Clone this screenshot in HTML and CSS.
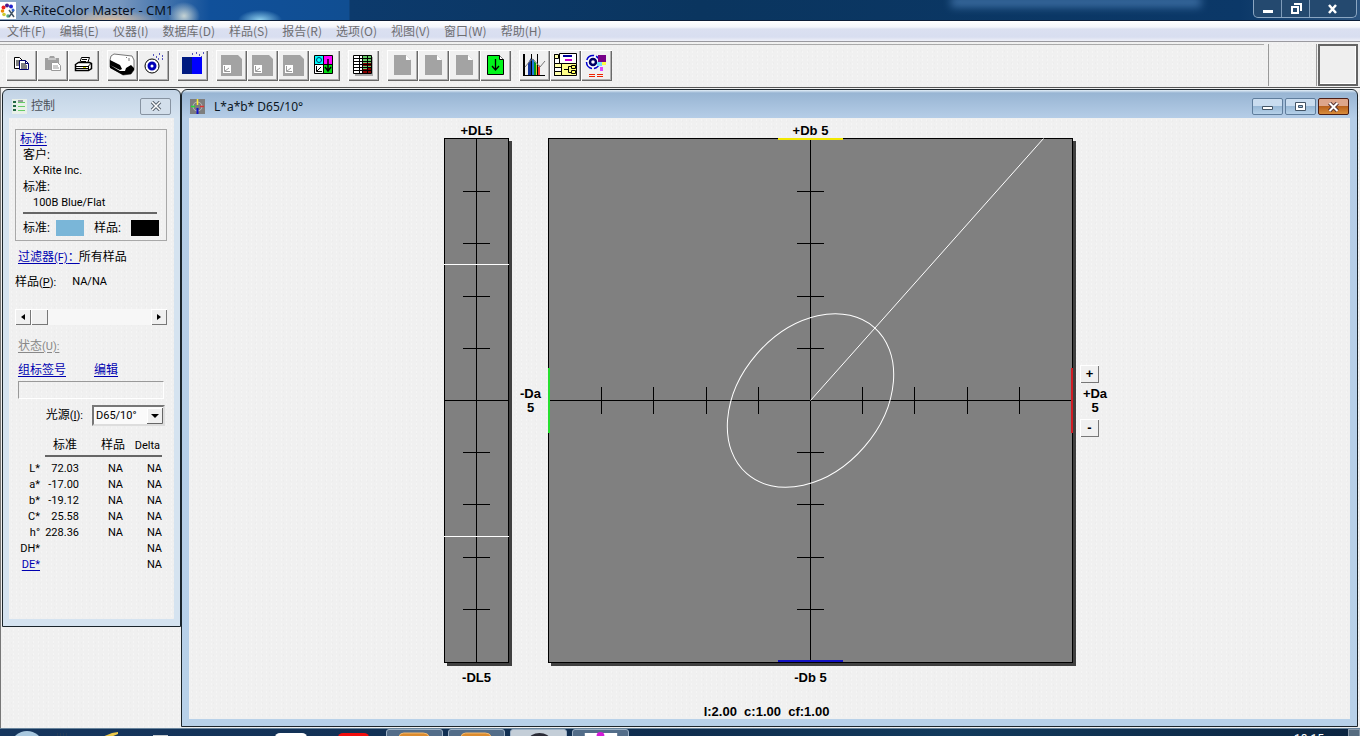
FILE: index.html
```html
<!DOCTYPE html>
<html lang="zh-CN">
<head>
<meta charset="utf-8">
<title>X-RiteColor Master - CM1</title>
<link rel="stylesheet" href="styles.css">
</head>
<body>
<header class="titlebar">
  <svg class="app-icon" viewBox="0 0 16 17"><rect width="16" height="17" fill="#fff"/><circle cx="7" cy="3.500" r="2" fill="#4a1a8c"/><circle cx="11" cy="4.500" r="2" fill="#22c"/><circle cx="3.500" cy="5.500" r="2" fill="#e22"/><circle cx="2.500" cy="9" r="1.800" fill="#e80"/><circle cx="4" cy="12.500" r="1.800" fill="#cc3"/><circle cx="8" cy="14" r="1.800" fill="#5a8"/><path d="M9 8l5 7M14 8l-5 7" stroke="#456" stroke-width="1.500"/><circle cx="13" cy="8" r="1.500" fill="#36c"/></svg>
  <h1 class="app-title">X-RiteColor Master - CM1</h1>
  <div class="glow"></div>
  <div class="win-buttons">
    <button class="win-btn" aria-label="最小化"><svg viewBox="0 0 12 12"><path d="M1 7h10v3H1z" fill="#fff"/></svg></button>
    <button class="win-btn" aria-label="还原"><svg viewBox="0 0 12 12"><path d="M4 1h7v7M2 4h6v6H2z" fill="none" stroke="#fff" stroke-width="2"/></svg></button>
    <button class="win-btn win-close" aria-label="关闭"><svg viewBox="0 0 12 12"><path d="M2 2l7 8M9 2l-7 8" stroke="#fff" stroke-width="2.500"/></svg></button>
  </div>
</header>

<nav class="menubar">
  <button>文件(F)</button><button>编辑(E)</button><button>仪器(I)</button><button>数据库(D)</button><button>样品(S)</button><button>报告(R)</button><button>选项(O)</button><button>视图(V)</button><button>窗口(W)</button><button>帮助(H)</button>
</nav>

<div class="toolbar">
  <div class="tools">
    <div class="group">
      <button aria-label="复制"><svg viewBox="0 0 31 31"><g fill="#fff" stroke="#000"><path d="M8.500 7.500h5l3 3v8h-8z"/><path d="M13.500 10.500h6l3 3v6h-9z" stroke="#00006a"/></g><path d="M10 11h4M10 13h3M10 15h3M15 14h5M15 16h6M15 18h6" stroke="#000"/><path d="M19.500 10.500v3h3" fill="none" stroke="#00006a"/></svg></button>
      <button aria-label="粘贴"><svg viewBox="0 0 31 31"><path d="M8 8h4l1-2h4l1 2h4v12H8z" fill="#a0a0a0"/><path d="M11 9h8" stroke="#eee"/><path d="M14.500 12.500h6l3 3v5h-9z" fill="#fff" stroke="#999"/><path d="M16 16h5M16 18h6" stroke="#999"/></svg></button>
      <button aria-label="打印"><svg viewBox="0 0 31 31"><path d="M11.500 13.500l2-6h8l-2 6" fill="#fff" stroke="#000"/><path d="M14 9.500h5M13 11.500h5" stroke="#000"/><path d="M7.500 14.500l3-2h11l2 1v5l-3 2h-13z" fill="#fff" stroke="#000" stroke-width="1.500"/><path d="M8 16.500h12l3-3M8 18.500h12M20.500 16v4" stroke="#000" fill="none"/><path d="M15 17.500h3" stroke="#cc0"/></svg></button>
    </div>
    <div class="group">
      <button aria-label="测量仪器"><svg viewBox="0 0 31 31"><path d="M4 6l3-2 18 2 2 4v10l-3 4-8 1-13-8V10z" fill="#fff" stroke="#777"/><path d="M3 10l10 5 2 4-2 1-10-5zM3 15l10 6h5l1-3 5-3 3 3v2l-3 4-8 1L3 18z" fill="#000"/><path d="M19 7l1 1M22 8v3" stroke="#777"/></svg></button>
      <button aria-label="校准"><svg viewBox="0 0 31 31"><circle cx="14" cy="16" r="7" fill="#fff" stroke="#000"/><circle cx="14" cy="16" r="3" fill="#fff" stroke="#0000b8" stroke-width="3"/><path d="M15 5h1M18 7h1M21 4h1M24 6h1M20 9h1M24 9h1" stroke="#22a" stroke-width="1.500"/></svg></button>
    </div>
    <div class="group">
      <button aria-label="颜色"><svg viewBox="0 0 31 31"><path d="M5 7h10v17H5z" fill="#001a80"/><path d="M15 7h10v17H15z" fill="#00f"/><path d="M15 4h1M19 3h1M22 5h1M26 3h1M24 7h1" stroke="#22a" stroke-width="1.500"/></svg></button>
    </div>
    <div class="group">
      <button aria-label="样品图一"><svg viewBox="0 0 31 31"><path d="M5 5h17l4 4v17H5z" fill="#a3a3a3"/><path d="M7 15h8v8H7z" fill="#fff"/><path d="M8.500 16v5.500H14M9 21l4-3" fill="none" stroke="#999"/></svg></button>
      <button aria-label="样品图二"><svg viewBox="0 0 31 31"><path d="M5 5h17l4 4v17H5z" fill="#a3a3a3"/><path d="M7 15h8v8H7z" fill="#fff"/><path d="M8.500 16v5.500H14M9 21l4-3" fill="none" stroke="#999"/></svg></button>
      <button aria-label="样品图三"><svg viewBox="0 0 31 31"><path d="M5 5h17l4 4v17H5z" fill="#a3a3a3"/><path d="M7 15h8v8H7z" fill="#fff"/><path d="M8.500 16v5.500H14M9 21l4-3" fill="none" stroke="#999"/></svg></button>
      <button aria-label="下一个视图"><svg viewBox="0 0 31 31"><path d="M6 6h9v9H6z" fill="#0ff"/><path d="M15 6h9v9h-9z" fill="#f0f"/><path d="M6 15h9v8H6z" fill="#fff"/><path d="M15 15h9v8h-9z" fill="#0d1"/><path d="M5.500 5.500h18v18h-18zM14.500 5.500v18M5.500 14.500h18" fill="none" stroke="#000"/><circle cx="10" cy="10" r="2.500" fill="none" stroke="#036"/><path d="M7.500 16v5.500H13M8 21l4-4" fill="none" stroke="#000"/><path d="M19 9v12M16 17l3 4 3-4" fill="none" stroke="#000" stroke-width="1.500"/></svg></button>
    </div>
    <div class="group">
      <button aria-label="数据表"><svg viewBox="0 0 31 31"><path d="M7 7h18v19H7z" fill="#aaa"/><path d="M5 5h9v18H5z" fill="#fff"/><path d="M14 5h9v18h-9z" fill="#6c6"/><path d="M15 13h8v3h-8zM15 19h8v4h-8zM19 17h4v2h-4z" fill="#800"/><path d="M5.500 5.500h18v18h-18zM5 8.500h18M5 11.500h18M5 14.500h18M5 17.500h18M5 20.500h18M11.500 5v18M14.500 5v18M19.500 5v18" fill="none" stroke="#000"/></svg></button>
    </div>
    <div class="group">
      <button aria-label="文档一"><svg viewBox="0 0 31 31"><path d="M7 5h12l5 5v15H7z" fill="#a3a3a3"/><path d="M19 5v5h5z" fill="#fff"/></svg></button>
      <button aria-label="文档二"><svg viewBox="0 0 31 31"><path d="M7 5h12l5 5v15H7z" fill="#a3a3a3"/><path d="M19 5v5h5z" fill="#fff"/></svg></button>
      <button aria-label="文档三"><svg viewBox="0 0 31 31"><path d="M7 5h12l5 5v15H7z" fill="#a3a3a3"/><path d="M19 5v5h5z" fill="#fff"/></svg></button>
      <button aria-label="下一个文档"><svg viewBox="0 0 31 31"><path d="M7.500 5.500h12l4 4v15h-16z" fill="#00f51a" stroke="#000"/><path d="M19.500 5.500v4h4" fill="#fff" stroke="#000"/><path d="M15.500 9v11M12 16l3.500 4 3.500-4" fill="none" stroke="#000" stroke-width="1.300"/></svg></button>
    </div>
    <div class="group">
      <button aria-label="光谱图"><svg viewBox="0 0 31 31"><path d="M9 13l3-5v17H9z" fill="#139"/><path d="M12 8l3 2v15h-3z" fill="#27d"/><path d="M15 11l2 2v12h-2z" fill="#092"/><path d="M17 14l2 2v9h-2z" fill="#dc2"/><path d="M19 17l2-2v10h-2z" fill="#e33"/><path d="M4 4h2v21h20v1H4zM12 4h1v21h-1zM18 4h1v21h-1z" fill="#000"/><path d="M6 17l5-6 3-2 7 8 5-6" fill="none" stroke="#777"/></svg></button>
      <button aria-label="数据库视图"><svg viewBox="0 0 31 31"><path d="M3.500 3.500h24v23h-24z" fill="#fff"/><path d="M4.500 4v22" stroke="#000"/><path d="M4.500 4.500h4v4h-4zM4.500 13.500h7v4h-7zM4.500 21.500h7v4h-7z" fill="#ffa" stroke="#000"/><path d="M9.500 3.500h17v10h-17z" fill="#fff" stroke="#000"/><path d="M13 6h9" stroke="#009" stroke-width="2"/><path d="M15 10h7" stroke="#c0c" stroke-width="2"/><path d="M11.500 13.500h15v12h-15z" fill="#ff8" stroke="#000"/><path d="M14 19.500h5M18.500 16.500v6M18.500 16.500h3M18.500 22.500h3" stroke="#000" fill="none"/><path d="M21.500 15.500h4v3h-4zM21.500 20.500h4v3h-4z" fill="#ff5" stroke="#000"/></svg></button>
      <button aria-label="目标选项"><svg viewBox="0 0 31 31"><circle cx="12" cy="12" r="6.500" fill="#fff" stroke="#00c" stroke-dasharray="9 2" stroke-width="1.500"/><circle cx="12" cy="12" r="3" fill="#fff" stroke="#006" stroke-width="2.500"/><path d="M17 5h8v7h-8z" fill="#708"/><path d="M16 12h5v4h-5z" fill="#7df"/><path d="M21 12h4v3h-4z" fill="#ff4"/><path d="M19 17h3v4h-3z" fill="#d4f"/><path d="M8 24.500h6M16 24.500h6M8 26.500h6M16 26.500h6" stroke="#e20"/></svg></button>
    </div>
  </div>
  <div class="tool-cell"></div>
  <div class="color-well"></div>
</div>

<main class="desktop">
  <section class="window panel">
    <header class="caption">
      <svg class="cap-icon" viewBox="0 0 15 15"><path d="M0 0h15v15H0z" fill="#e8f0e8"/><path d="M1 3h3M1 7h3M1 11h3" stroke="#264" stroke-width="2"/><path d="M6 3.500h7M6 7.500h7M6 11.500h7" stroke="#6c6"/><path d="M6 2h5" stroke="#445"/></svg>
      <h2>控制</h2>
      <button class="panel-close" aria-label="关闭控制"><svg viewBox="0 0 12 10"><path d="M2 1l8 8M10 1L2 9" stroke="#59646f" stroke-width="3.500"/><path d="M2 1l8 8M10 1L2 9" stroke="#fff" stroke-width="1.500"/></svg></button>
    </header>
    <div class="panel-body">
      <div class="standard">
        <a href="#standard">标准:</a>
        <div class="indent-1">客户:</div>
        <div class="indent-2">X-Rite Inc.</div>
        <div class="indent-1">标准:</div>
        <div class="indent-2">100B Blue/Flat</div>
        <hr>
        <div class="swatches"><span>标准:</span><i class="swatch blue"></i><span>样品:</span><i class="swatch black"></i></div>
      </div>
      <div class="filter"><a href="#filter">过滤器<small>(F)</small>：</a><span>所有样品</span></div>
      <div class="sample"><label for="sample">样品<small>(<u>P</u>):</small></label><small>NA/NA</small></div>
      <div class="scroll"><button aria-label="上一个样品"><svg viewBox="0 0 6 8"><path d="M5 1v6L1 4z"/></svg></button><input id="sample" type="range" min="0" max="10" value="0"><button aria-label="下一个样品"><svg viewBox="0 0 6 8"><path d="M1 1v6l4-3z"/></svg></button></div>
      <label class="status" for="status">状态<small>(U):</small></label>
      <div class="links"><a href="#tag">组标签号</a><a href="#edit">编辑</a></div>
      <input class="status-box" id="status" type="text" readonly>
      <div class="light">
        <label for="light">光源<small>(<u>I</u>):</small></label>
        <div class="select-wrap"><select id="light"><option>D65/10°</option></select><svg viewBox="0 0 16 16"><path d="M0 0h16v16H0z" fill="#f0f0f0"/><path d="M.5 16V.5H16" fill="none" stroke="#fff"/><path d="M0 15.500h15.500V0" fill="none" stroke="#666"/><path d="M4 6h8l-4 4z"/></svg></div>
      </div>
      <table class="values">
        <thead><tr><td></td><th class="ruled">标准</th><th class="ruled">样品</th><th class="ruled"><small>Delta</small></th></tr></thead>
        <tbody>
          <tr><th>L*</th><td>72.03</td><td>NA</td><td>NA</td></tr>
          <tr><th>a*</th><td>-17.00</td><td>NA</td><td>NA</td></tr>
          <tr><th>b*</th><td>-19.12</td><td>NA</td><td>NA</td></tr>
          <tr><th>C*</th><td>25.58</td><td>NA</td><td>NA</td></tr>
          <tr><th>h°</th><td>228.36</td><td>NA</td><td>NA</td></tr>
          <tr><th>DH*</th><td></td><td></td><td>NA</td></tr>
          <tr><th><a href="#de">DE*</a></th><td></td><td></td><td>NA</td></tr>
        </tbody>
      </table>
    </div>
  </section>

  <section class="window chart">
    <header class="caption">
      <svg class="cap-icon" viewBox="0 0 15 15"><path d="M0 0h15v15H0z" fill="#7d7d7d"/><circle cx="7.500" cy="7.500" r="4.500" fill="none" stroke="#bbb"/><path d="M7.500 0v6" stroke="#fe3" stroke-width="1.500"/><path d="M7.500 9v6" stroke="#11c" stroke-width="2"/><path d="M1 7.500h4" stroke="#2d3" stroke-width="1.500"/><path d="M10 7.500h4" stroke="#d33" stroke-width="1.500"/></svg>
      <h2>L*a*b* D65/10°</h2>
      <div class="child-buttons">
        <button aria-label="最小化子窗口"><svg viewBox="0 0 13 10"><path d="M1.500 4.500h10v3h-10z" fill="#fff" stroke="#456"/></svg></button>
        <button aria-label="最大化子窗口"><svg viewBox="0 0 13 10"><path d="M1.500.5h10v8h-10z" fill="#fff" stroke="#456"/><path d="M4.500 3.500h4v2h-4z" fill="#9bd" stroke="#456"/></svg></button>
        <button class="child-close" aria-label="关闭子窗口"><svg viewBox="0 0 12 10"><path d="M2 1l8 8M10 1L2 9" stroke="#533" stroke-width="4"/><path d="M2 1l8 8M10 1L2 9" stroke="#fff" stroke-width="2"/></svg></button>
      </div>
    </header>
    <div class="chart-body">
      <div class="plots">
        <div class="label dl-top">+DL5</div>
        <div class="label db-top">+Db 5</div>
        <svg class="plot dl" viewBox="0 0 65 525">
          <path d="M0 0h65v525H0z" fill="#808080"/>
          <path d="M.5.5h64v524H.5zM32.500 0v525M0 262.500h65M19 53.500h27M19 105.500h27M19 158.500h27M19 210.500h27M19 314.500h27M19 366.500h27M19 419.500h27M19 471.500h27" fill="none" stroke="#000"/>
          <path d="M0 126.500h65M0 398.500h65" stroke="#fff"/>
        </svg>
        <div class="label da-left">-Da<br>5</div>
        <svg class="plot ab" viewBox="0 0 525 525">
          <path d="M0 0h525v525H0z" fill="#808080"/>
          <path d="M.5.5h524v524H.5zM262.500 0v525M0 262.500h525M249 53.500h27M249 105.500h27M249 158.500h27M249 210.500h27M249 314.500h27M249 366.500h27M249 419.500h27M249 471.500h27M53.500 249v27M105.500 249v27M158.500 249v27M210.500 249v27M314.500 249v27M366.500 249v27M419.500 249v27M471.500 249v27" fill="none" stroke="#000"/>
          <path class="curve" d="M262.500 262.500L495.500.5"/>
          <ellipse class="curve" cx="262.500" cy="262.500" rx="97" ry="71" transform="rotate(-49 262.500 262.500)"/>
          <path d="M230 0h65v2h-65z" fill="#f2e800"/><path d="M230 522h65v2h-65z" fill="#1010c0"/><path d="M0 230h2v65H0z" fill="#28e030"/><path d="M523 230h2v65h-2z" fill="#d01c24"/>
        </svg>
        <div class="da-right"><button aria-label="放大">+</button><div class="label">+Da<br>5</div><button aria-label="缩小">-</button></div>
        <div class="label dl-bottom">-DL5</div>
        <div class="label db-bottom">-Db 5</div>
      </div>
      <div class="label factors">l:2.00&nbsp; c:1.00&nbsp; cf:1.00</div>
    </div>
  </section>
</main>

<footer class="taskbar">
  <svg class="quick" viewBox="0 0 386 8"><ellipse cx="27" cy="15" rx="15" ry="13" fill="#a9c8df"/><path d="M57 5h10M57 7h10" stroke="#345" stroke-dasharray="1 2"/><path d="M102 8l10-4 6-1v2l-7 3z" fill="#ecc94b"/><path d="M153 6h15v2h-15z" fill="#c6ccd0"/><rect x="275" y="4" width="32" height="9" rx="5" fill="#fff"/><rect x="338" y="4" width="31" height="9" rx="5" fill="#f20d0d"/></svg>
  <button class="task" aria-label="任务一"><svg viewBox="0 0 56 7"><path d="M12 7q1-4 5-4h20q5 0 6 4z" fill="#dc8b2d" stroke="#f4bd74"/></svg></button>
  <button class="task" aria-label="任务二"><svg viewBox="0 0 56 7"><path d="M12 7q1-4 5-4h20q5 0 6 4z" fill="#dc8b2d" stroke="#f4bd74"/></svg></button>
  <button class="task lit" aria-label="任务三"><svg viewBox="0 0 56 7"><ellipse cx="29" cy="10" rx="11" ry="7" fill="#2b2b36"/></svg></button>
  <button class="task" aria-label="任务四"><svg viewBox="0 0 56 7"><path d="M12 3h33v4H12z" fill="#fff"/><circle cx="28" cy="6" r="4" fill="#d31bd8"/></svg></button>
  <span class="clock">18:15</span>
  <button class="show-desktop" aria-label="显示桌面"></button>
</footer>
</body>
</html>
```
FILE: styles.css
```css
* { box-sizing: border-box; }
body {
  margin: 0;
  min-height: 100vh;
  display: flex;
  flex-direction: column;
  overflow: hidden;
  background: #f0f0f0;
  color: #000;
  font: 12px/16px Roboto, "Noto Sans CJK SC", sans-serif;
}
button, input, select { font: inherit; color: inherit; margin: 0; padding: 0; border: 0; background: none; border-radius: 0; }
h1, h2 { margin: 0; font-size: 12px; font-weight: 400; }
small { font-size: 11px; }
a { color: #0000b0; text-underline-offset: 2px; }
svg { display: block; }

.titlebar {
  display: flex;
  align-items: center;
  height: 21px;
  border-bottom: 1px solid #0b1d38;
  background:
    radial-gradient(ellipse 16px 14px at 184px 16px, #c5d3d4, transparent),
    radial-gradient(ellipse 22px 10px at 260px 20px, #8fd0ee, transparent),
    radial-gradient(ellipse 50px 10px at 110px 20px, #d8bda0, transparent),
    linear-gradient(90deg, #8ea9c9 0, #7797bf 120px, #10509a 210px, #104e92 349px, #0c3a6c 350px, #0a355f 700px, #0b3868 1240px, #2b5480 100%);
}
.app-icon { width: 16px; height: 17px; }
.app-title { margin-left: 5px; font-size: 13px; font-family: "Noto Sans", sans-serif; color: #08101c; }
.glow { width: 250px; height: 10px; margin: 0 52px 16px auto; background: #5286bd; filter: blur(4px); opacity: .7; }
.win-buttons { display: flex; align-self: flex-start; margin-right: 3px; border: 1px solid #8ba6c2; border-top: 0; border-radius: 0 0 5px 5px; background: #24496f; }
.win-btn { display: grid; place-items: center; width: 28px; height: 17px; border-right: 1px solid #7f9cba; }
.win-btn svg { width: 12px; height: 12px; }
.win-close { width: 46px; border: 0; }

.menubar {
  display: flex;
  gap: 14px;
  height: 21px;
  padding-left: 7px;
  border-bottom: 1px solid #9a9aa0;
  background: linear-gradient(#fff 0, #f4f6fb 6px, #dbe0f1 8px, #d8def0 16px, #eef0f8);
  color: #6e6e72;
  font-family: "Noto Sans CJK SC", sans-serif;
}
.menubar button { line-height: 18px; white-space: nowrap; }

.toolbar { display: flex; height: 46px; padding: 2px 2px 1px 0; border-bottom: 1px solid #555; }
.panel-body, .chart-body, .desktop, .toolbar {
  background-color: #f0f0f0;
  background-image: radial-gradient(#f5f5f5 1px, transparent 1px), radial-gradient(#ededed 1px, transparent 1px);
  background-size: 5px 4px, 7px 6px;
}
.tools { flex: 1; display: flex; gap: 8px; margin-right: 4px; padding: 5px 0 0 6px; border-top: 1px solid #aaa; }
.group { display: flex; }
.group button { width: 31px; height: 31px; background: #f0f0f0; box-shadow: inset 1px 1px #fff, inset -1px -1px #696969, inset -2px -2px #b0b0b0; }
.group svg { width: 31px; height: 31px; }
.tool-cell { width: 49px; border: solid #999; border-width: 0 1px; margin-right: 1px; }
.color-well { width: 40px; border: 2px solid #646464; box-shadow: inset -1px -1px #fff; background: #efefef; }

.desktop { flex: 1; display: flex; align-items: flex-start; padding: 1px 2px 1px 1px; border-left: 1px solid #777; }
.window { display: flex; flex-direction: column; border: 1px solid #1b252c; border-radius: 6px 6px 0 0; }
.caption { display: flex; align-items: center; height: 28px; }
.cap-icon { width: 15px; height: 15px; }
.panel { width: 179px; height: 538px; padding: 0 6px 7px; background: linear-gradient(#c2d3e5, #d5e3f0 28px, #d5e3f0); }
.panel .caption { padding: 4px 3px 0; color: #4a5058; gap: 4px; }
.panel-close { display: grid; place-items: center; width: 31px; height: 17px; margin-left: auto; border: 1px solid #8793a1; border-radius: 2px; background: #d3dfeb; }
.panel-close svg { width: 12px; height: 10px; }
.chart { flex: 1; align-self: stretch; padding: 0 7px 7px; background: linear-gradient(#e4eff8, #98b5d3 3px, #b5cde7 28px, #b8d1e9); }
.chart .caption { padding: 5px 1px 0; gap: 9px; font-family: "Noto Sans", sans-serif; color: #0b1622; }
.child-buttons { display: flex; gap: 2px; margin-left: auto; }
.child-buttons button { display: grid; place-items: center; width: 31px; height: 17px; border: 1px solid #5f7d9c; border-radius: 2px; background: linear-gradient(#c9dcef 45%, #98b8d6 50%, #b5d0e8); }
.child-buttons svg { width: 13px; height: 10px; }
.child-buttons .child-close { border-color: #4c1d14; background: linear-gradient(#dda58a 45%, #b9611c 50%, #d98d3c); }

.panel-body { flex: 1; padding: 11px 7px 0 6px; }
.standard { height: 112px; border: 1px solid #a8a8a8; padding: 1px 4px 0; }
.standard a { display: block; width: fit-content; }
.indent-1 { padding-left: 3px; }
.indent-2 { padding-left: 13px; font-size: 11px; }
.standard hr { height: 2px; margin: 1px 5px 6px 3px; border: 0; background: #666; }
.swatches { display: flex; align-items: center; padding-left: 3px; }
.swatch { width: 28px; height: 16px; }
.swatch.blue { background: #7ab6d8; margin: 0 10px 0 6px; }
.swatch.black { background: #000; margin-left: 10px; }
.filter { display: flex; padding: 8px 0 0 3px; }
.filter a { margin-right: -1px; }
.sample { display: flex; gap: 16px; padding-top: 8px; }
.scroll { display: flex; height: 16px; margin: 18px 0 13px; background: #f7f7f7; }
.scroll button { display: grid; place-items: center; width: 16px; height: 16px; background: #f0f0f0; box-shadow: inset 1px 1px #fff, inset -1px -1px #777; }
.scroll svg { width: 6px; height: 8px; }
.scroll input { flex: 1; min-width: 0; appearance: none; height: 16px; }
.scroll input::-webkit-slider-thumb { appearance: none; width: 17px; height: 16px; background: #f0f0f0; box-shadow: inset 1px 1px #fff, inset -1px -1px #777; }
.status { display: block; width: fit-content; margin: 0 0 7px 3px; color: #888; text-decoration: underline; text-underline-offset: 2px; }
.links { display: flex; gap: 28px; padding-left: 3px; }
.status-box { display: block; width: calc(100% - 6px); height: 18px; margin: 3px 0 6px 3px; border: 1px solid; border-color: #999 #fff #fff #999; }
.light { display: flex; align-items: center; justify-content: flex-end; gap: 9px; padding-right: 2px; }
.select-wrap { display: flex; align-items: center; width: 73px; height: 21px; border: 2px solid; border-color: #777 #ddd #ddd #777; background: #fafafa; }
.select-wrap select { flex: 1; min-width: 0; appearance: none; padding-left: 2px; outline: 0; font-size: 11px; }
.select-wrap svg { width: 16px; height: 16px; flex: none; }
.values { width: 147px; margin-top: 11px; border-spacing: 0; table-layout: fixed; text-align: right; }
.values th { font-weight: 400; text-align: right; }
.values th, .values td { padding: 0; height: 16px; line-height: 16px; }
.values thead td { width: 30px; }
.values tbody { font-size: 11px; }
.values .ruled { height: 20px; padding-right: 2px; border-bottom: 2px solid #666; vertical-align: top; }
.values .ruled:nth-child(2) { width: 34px; }
.values .ruled:nth-child(3) { width: 46px; padding-right: 0; }
.values .ruled:last-child { width: 37px; }
.values tbody tr:first-child > * { height: 20px; padding-top: 4px; }
.values tbody th { padding-right: 5px; }
.values tbody td:nth-child(3) { padding-right: 2px; }

.chart-body { flex: 1; padding-top: 6px; }
.plots {
  display: grid;
  grid-template-columns: 65px 39px minmax(0, 525px) 38px;
  grid-template-rows: 14px auto 30px;
  justify-content: center;
  padding-left: 16px;
}
.label { font: bold 13px/14px "Liberation Sans", Arial, sans-serif; text-align: center; white-space: nowrap; }
.plot { width: 100%; box-shadow: 3px 3px #404040; shape-rendering: crispEdges; }
.curve { fill: none; stroke: #fff; shape-rendering: geometricPrecision; }
.db-top { grid-column: 3; }
.dl, .dl-bottom { grid-column: 1; }
.da-left { align-self: center; padding-left: 4px; }
.da-right { align-self: center; justify-self: end; display: grid; gap: 4px; width: 32px; }
.da-right .label { padding-left: 0; }
.da-right button { width: 19px; height: 18px; margin-left: 1px; background: #f0f0f0; font: bold 13px/16px "Liberation Sans", Arial, sans-serif; box-shadow: inset 1px 1px #fff, inset -1px -1px #777; }
.dl-bottom, .db-bottom { padding-top: 8px; }
.db-bottom { grid-column: 3; }
.factors { padding: 12px 6px 0 0; }

.taskbar { display: flex; flex: none; height: 9px; overflow: hidden; border-top: 1px solid #68849c; background: linear-gradient(90deg, #16365e, #0f2d4e 50%, #123a5c 70%, #0b2440); }
.quick { width: 386px; height: 8px; flex: none; }
.task { width: 57px; height: 12px; margin-right: 5px; border: 1px solid #9db1c6; border-radius: 3px 3px 0 0; background: #536d89; flex: none; }
.task svg { width: 55px; height: 7px; margin-bottom: 4px; }
.task.lit { background: #c4ced8; }
.clock { margin: 4px 24px 0 auto; color: #fff; line-height: 12px; }
.show-desktop { width: 12px; height: 12px; border: 1px solid #8a9aaa; background: #566c80; }
```
